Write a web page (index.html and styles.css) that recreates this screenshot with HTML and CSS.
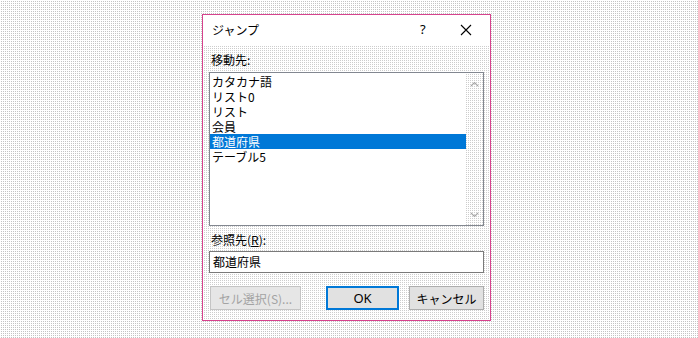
FILE: index.html
```html
<!DOCTYPE html>
<html lang="ja">
<head>
<meta charset="utf-8">
<link rel="stylesheet" href="styles.css">
</head>
<body>
<div class="dialog">
  <div class="titlebar">
    <span class="title">ジャンプ</span>
    <span class="help">?</span>
    <svg class="close" width="12" height="12" viewBox="0 0 12 12"><path d="M1 1L11 11M11 1L1 11" stroke="#000" stroke-width="1.1" fill="none"/></svg>
  </div>
  <div class="content">
    <div class="label">移動先:</div>
    <div class="listbox">
      <ul class="items">
        <li><span>カタカナ語</span></li>
        <li><span>リスト0</span></li>
        <li><span>リスト</span></li>
        <li><span>会員</span></li>
        <li class="selected"><span>都道府県</span></li>
        <li><span>テーブル5</span></li>
      </ul>
      <div class="scrollbar">
        <svg width="9" height="6" viewBox="0 0 9 6"><path d="M1 5L4.5 1.5L8 5" stroke="#a6a6a6" stroke-width="1.2" fill="none"/></svg>
        <svg width="9" height="6" viewBox="0 0 9 6"><path d="M1 1L4.5 4.5L8 1" stroke="#a6a6a6" stroke-width="1.2" fill="none"/></svg>
      </div>
    </div>
    <div class="label label2">参照先(<u>R</u>):</div>
    <div class="input">都道府県</div>
    <div class="buttons">
      <div class="btn btn-disabled">セル選択(S)...</div>
      <div class="btn btn-default">OK</div>
      <div class="btn btn-cancel">キャンセル</div>
    </div>
  </div>
</div>
</body>
</html>
```

FILE: styles.css
```css
html, body {
  margin: 0;
  padding: 0;
}
body {
  width: 698px;
  height: 338px;
  box-sizing: border-box;
  padding: 14px 0 0 202px;
  background-color: #c4c4c4;
  background-image:
    linear-gradient(to right, #ffffff 50%, transparent 50%),
    linear-gradient(to bottom, #ffffff 50%, transparent 50%);
  background-size: 2px 2px;
  font-family: "Noto Sans CJK JP", "Noto Sans", sans-serif;
  font-size: 12px;
  color: #000;
  overflow: hidden;
}
.dialog {
  width: 289px;
  height: 307px;
  box-sizing: border-box;
  border: 1px solid #d6428d;
  display: flex;
  flex-direction: column;
}
.titlebar {
  height: 30px;
  background: #fff;
  display: flex;
  align-items: center;
  flex: none;
}
.title {
  margin-left: 9px;
  line-height: 15px;
  margin-top: -1px;
}
.help {
  margin-left: auto;
  font-family: "Noto Sans", sans-serif;
  font-size: 13px;
  line-height: 15px;
  width: 10px;
  margin-top: -1px;
}
.close {
  margin-left: 30px;
  margin-right: 18px;
  margin-top: -1px;
}
.content {
  flex: 1;
  padding: 7px 6px 0 6px;
  display: flex;
  flex-direction: column;
  background-color: #cdcdcd;
  background-image:
    linear-gradient(to right, #ffffff 50%, transparent 50%),
    linear-gradient(to bottom, #ffffff 50%, transparent 50%);
  background-size: 2px 2px;
}
.label {
  line-height: 15px;
  height: 15px;
  padding-left: 2px;
  margin-bottom: 5px;
}
.label2 {
  margin-top: 6px;
  margin-bottom: 4px;
}
.listbox {
  height: 154px;
  box-sizing: border-box;
  border: 1px solid #828790;
  display: flex;
}
.items {
  list-style: none;
  margin: 0;
  padding: 1px 0 0 0;
  flex: 1;
  background: #fff;
}
.items li {
  height: 15px;
  line-height: 15px;
  padding-left: 2px;
  overflow: hidden;
}
.items li span {
  display: inline-block;
  height: 15px;
  line-height: 15px;
  vertical-align: top;
}
.items li.selected {
  background: #0078d7;
  color: #fff;
}
.scrollbar {
  width: 17px;
  display: flex;
  flex-direction: column;
  align-items: center;
  justify-content: space-between;
  padding: 8px 0 7px;
  box-sizing: border-box;
}
.input {
  height: 22px;
  box-sizing: border-box;
  border: 1px solid #7a7a7a;
  background: #fff;
  line-height: 20px;
  padding-left: 3px;
}
.buttons {
  display: flex;
  margin-top: 13px;
  padding-left: 1px;
}
.btn {
  height: 24px;
  box-sizing: border-box;
  border: 1px solid #adadad;
  background: #e1e1e1;
  display: flex;
  align-items: center;
  justify-content: center;
  line-height: 15px;
}
.btn-disabled {
  width: 91px;
  color: #a3a3a3;
  border-color: #c4c4c4;
  background: #e6e6e6;
  margin-right: auto;
}
.btn-default {
  width: 73px;
  border: 2px solid #0078d7;
  font-family: "Noto Sans", sans-serif;
  font-size: 13px;
}
.btn-cancel {
  width: 75px;
  margin-left: 10px;
}
```
